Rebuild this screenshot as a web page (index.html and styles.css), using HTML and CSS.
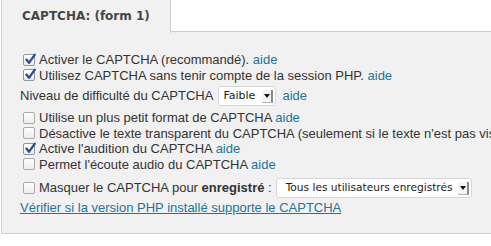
FILE: index.html
```html
<!DOCTYPE html>
<html lang="fr">
<head>
<meta charset="utf-8">
<title>CAPTCHA</title>
<link rel="stylesheet" href="styles.css">
</head>
<body>
<div class="wrap">
  <div class="tabs">
    <div class="tab">CAPTCHA: (form 1)</div>
    <div class="tab-fill"></div>
  </div>
  <div class="panel">
    <div class="row"><span class="cb on"><svg viewBox="0 0 12 12" width="12" height="12"><path d="M2.4 5.6 L5 8.8 L10.8 0.6" fill="none" stroke="#2b4f8e" stroke-width="2.3" stroke-linecap="round" stroke-linejoin="round"/></svg></span><span class="label">Activer le CAPTCHA (recommandé). <a class="help">aide</a></span></div>
    <div class="row"><span class="cb on"><svg viewBox="0 0 12 12" width="12" height="12"><path d="M2.4 5.6 L5 8.8 L10.8 0.6" fill="none" stroke="#2b4f8e" stroke-width="2.3" stroke-linecap="round" stroke-linejoin="round"/></svg></span><span class="label">Utilisez CAPTCHA sans tenir compte de la session PHP. <a class="help">aide</a></span></div>
    <div class="row select-row level">
      <span class="plain">Niveau de difficulté du CAPTCHA</span>
      <span class="select faible"><span class="sel-text">Faible</span><span class="arrow"></span></span>
      <a class="help">aide</a>
    </div>
    <div class="row"><span class="cb"></span><span class="label">Utilise un plus petit format de CAPTCHA <a class="help">aide</a></span></div>
    <div class="row"><span class="cb"></span><span class="label">Désactive le texte transparent du CAPTCHA (seulement si le texte n'est pas visible) <a class="help">aide</a></span></div>
    <div class="row"><span class="cb on"><svg viewBox="0 0 12 12" width="12" height="12"><path d="M2.4 5.6 L5 8.8 L10.8 0.6" fill="none" stroke="#2b4f8e" stroke-width="2.3" stroke-linecap="round" stroke-linejoin="round"/></svg></span><span class="label">Active l'audition du CAPTCHA <a class="help">aide</a></span></div>
    <div class="row"><span class="cb"></span><span class="label">Permet l'écoute audio du CAPTCHA <a class="help">aide</a></span></div>
    <div class="row select-row hide">
      <span class="cb"></span><span class="label">Masquer le CAPTCHA pour <b>enregistré</b> :</span>
      <span class="select users"><span class="sel-text">Tous les utilisateurs enregistrés</span><span class="arrow"></span></span>
    </div>
    <div class="row link-row"><a class="check-link">Vérifier si la version PHP installé supporte le CAPTCHA</a></div>
  </div>
</div>
</body>
</html>
```

FILE: styles.css
```css
html, body {
  margin: 0;
  padding: 0;
  background: #fff;
  overflow: hidden;
}

body {
  font-family: "Liberation Sans", Arial, sans-serif;
  font-size: 13px;
  color: #333;
}

.wrap {
  margin-left: 1px;
  border-left: 1px solid #d4d4d4;
  width: 620px;
}

.tabs {
  display: flex;
  height: 32px;
}

.tab {
  width: 148px;
  height: 32px;
  padding-left: 20px;
  padding-top: 1px;
  box-sizing: content-box;
  background: #f1f1f1;
  border-right: 1px solid #cfcfcf;
  font-family: "DejaVu Sans", sans-serif;
  font-weight: bold;
  font-size: 12px;
  line-height: 31px;
  color: #464646;
  margin-bottom: -1px;
}

.tab-fill {
  flex: 1;
  background: #fff;
  border-bottom: 1px solid #cfcfcf;
  height: 31px;
}

.panel {
  background: #f1f1f1;
  border-bottom: 1px solid #cfcfcf;
  padding: 20px 0 17.5px 18px;
  white-space: nowrap;
}

.row {
  display: flex;
  align-items: center;
  height: 15.5px;
  line-height: 15.5px;
}

.cb {
  flex: none;
  width: 10px;
  height: 10px;
  margin-left: 3px;
  margin-right: 4px;
  border: 1px solid #a9a9a9;
  border-radius: 2px;
  background: linear-gradient(#ffffff, #ececec);
  position: relative;
}

.cb.on {
  border-color: #8f97a6;
}

.cb svg {
  position: absolute;
  left: 0;
  top: -1px;
  overflow: visible;
}

.help {
  color: #21759b;
  text-decoration: none;
}

.select-row {
  height: 22px;
}

.level {
  margin-top: 2px;
  margin-bottom: 3px;
}

.hide {
  height: 24px;
  margin-top: 4px;
}

.select {
  display: inline-flex;
  align-items: center;
  box-sizing: border-box;
  height: 20px;
  background: #fff;
  border: 1px solid #d6d6d6;
  border-radius: 3px;
  font-family: "DejaVu Sans", sans-serif;
  font-size: 11px;
  color: #1a1a1a;
}

.faible {
  width: 58px;
  margin-left: 5px;
  margin-right: 6px;
  padding-left: 4px;
}

.users {
  width: 196px;
  margin-left: 4px;
  padding-left: 9px;
  font-size: 10.6px;
}

.sel-text {
  flex: 1;
}

.arrow {
  flex: none;
  width: 11px;
  height: 13px;
  margin-right: 2px;
  box-sizing: border-box;
  background: #f4f4f4;
  border-right: 2px solid #8a8a8a;
  border-bottom: 1px solid #b5b5b5;
  position: relative;
}

.arrow::after {
  content: "";
  position: absolute;
  left: 2px;
  top: 4px;
  border-left: 3px solid transparent;
  border-right: 3px solid transparent;
  border-top: 4px solid #111;
}

.link-row {
  height: 15.5px;
}

.check-link {
  color: #21759b;
  text-decoration: underline;
}
```
